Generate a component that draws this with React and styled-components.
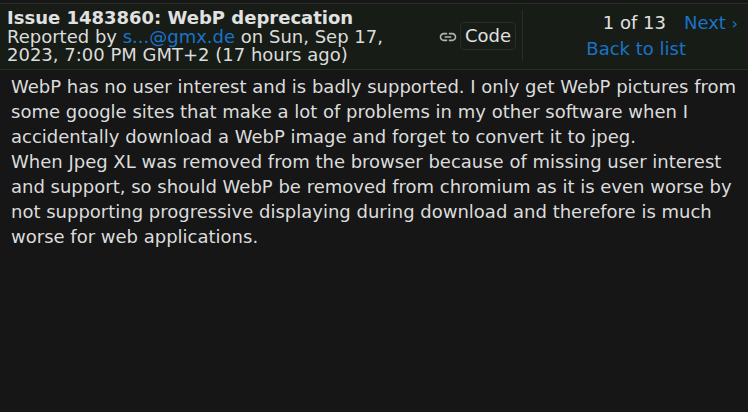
import React from "react";
import styled, { createGlobalStyle } from "styled-components";

const Global = createGlobalStyle`
  html, body {
    margin: 0;
    height: 100%;
    background: #161616;
  }
  body {
    font-family: "DejaVu Sans", sans-serif;
    color: #e1e1e1;
    overflow: hidden;
  }
`;

const Page = styled.div`
  width: 748px;
  height: 412px;
  padding-top: 3px;
  box-sizing: border-box;
`;

const Header = styled.header`
  height: 67px;
  box-sizing: border-box;
  display: flex;
  align-items: center;
  background: #171c17;
  border-top: 1px solid #2a2d2a;
  border-bottom: 1px solid #2a2d2a;
  padding: 0 0 2px 7px;
`;

const Summary = styled.div`
  width: 431px;
  flex: none;
`;

const Title = styled.h1`
  margin: 0;
  font-size: 18px;
  line-height: 20px;
  font-weight: 700;
`;

const Meta = styled.div`
  font-size: 18px;
  line-height: 18px;
  color: #dcdcdc;
`;

const Link = styled.a`
  color: #1a73c8;
`;

const CodeLink = styled.div`
  display: flex;
  align-items: center;
  gap: 2px;
  height: 51px;
  width: 84px;
  flex: none;
  border-right: 1px solid #2a2d2a;
`;

const LinkIcon = styled.svg`
  width: 20px;
  height: 20px;
  margin-top: 3px;
  fill: #b4b4b4;
`;

const CodeButton = styled.span`
  font-size: 18px;
  line-height: 26px;
  padding: 0 4px;
  border: 1px solid #2a2d2a;
  border-radius: 4px;
`;

const Pager = styled.nav`
  flex: 1;
  display: flex;
  flex-direction: column;
  align-items: flex-end;
  padding-right: 10px;
  font-size: 18px;
  line-height: 25px;
`;

const PagerTop = styled.div`
  display: flex;
  gap: 18px;
`;

const Chevron = styled.span`
  font-size: 16px;
`;

const BackLink = styled(Link)`
  margin-right: 52px;
`;

const Body = styled.div`
  padding: 4px 11px;
  font-size: 18px;
  line-height: 25px;
  color: #dcdcdc;
`;

export default function App() {
  return (
    <Page>
      <Global />
      <Header>
        <Summary>
          <Title>Issue 1483860: WebP deprecation</Title>
          <Meta>
            Reported by <Link>s...@gmx.de</Link> on Sun, Sep 17,
            <br />
            2023, 7:00 PM GMT+2 (17 hours ago)
          </Meta>
        </Summary>
        <CodeLink>
          <LinkIcon viewBox="0 0 24 24">
            <path d="M3.9 12c0-1.71 1.39-3.1 3.1-3.1h4V7H7c-2.76 0-5 2.24-5 5s2.24 5 5 5h4v-1.9H7c-1.71 0-3.1-1.39-3.1-3.1zM8 13h8v-2H8v2zm9-6h-4v1.9h4c1.71 0 3.1 1.39 3.1 3.1s-1.39 3.1-3.1 3.1h-4V17h4c2.76 0 5-2.24 5-5s-2.24-5-5-5z" />
          </LinkIcon>
          <CodeButton>Code</CodeButton>
        </CodeLink>
        <Pager>
          <PagerTop>
            <span>1 of 13</span>
            <Link>
              Next <Chevron>›</Chevron>
            </Link>
          </PagerTop>
          <BackLink>Back to list</BackLink>
        </Pager>
      </Header>
      <Body>
        WebP has no user interest and is badly supported. I only get WebP pictures from some google sites that make a lot of problems in my other software when I accidentally download a WebP image and forget to convert it to jpeg.
        <br />
        When Jpeg XL was removed from the browser because of missing user interest and support, so should WebP be removed from chromium as it is even worse by not supporting progressive displaying during download and therefore is much worse for web applications.
      </Body>
    </Page>
  );
}
